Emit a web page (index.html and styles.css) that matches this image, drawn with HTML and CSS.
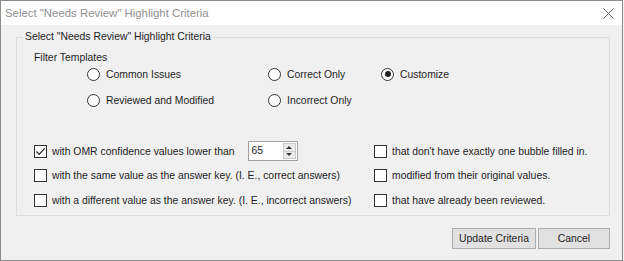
FILE: index.html
```html
<!DOCTYPE html>
<html lang="en">
<head>
    <meta charset="UTF-8">
    <title>Select "Needs Review" Highlight Criteria</title>
    <link rel="stylesheet" href="styles.css">
</head>
<body>
    <div class="window">
        <div class="titlebar">
            <span class="title">Select "Needs Review" Highlight Criteria</span>
            <svg class="close" width="11" height="11" viewBox="0 0 11 11">
                <path d="M0.5 0.5 L10.5 10.5 M10.5 0.5 L0.5 10.5" stroke="#6a6a6a" stroke-width="1" fill="none"/>
            </svg>
        </div>
        <div class="content">
            <fieldset class="group">
                <legend>Select "Needs Review" Highlight Criteria</legend>
                <div class="caption">Filter Templates</div>
                <div class="templates">
                    <label class="option"><span class="radio"></span>Common Issues</label>
                    <label class="option"><span class="radio"></span>Correct Only</label>
                    <label class="option"><span class="radio checked"></span>Customize</label>
                    <label class="option"><span class="radio"></span>Reviewed and Modified</label>
                    <label class="option"><span class="radio"></span>Incorrect Only</label>
                </div>
                <div class="criteria">
                    <div class="option">
                        <span class="check">
                            <svg width="11" height="11" viewBox="0 0 11 11">
                                <path d="M1.5 5.5 L4.2 8.3 L9.6 2.4" stroke="#222" stroke-width="1.2" fill="none"/>
                            </svg>
                        </span>
                        with OMR confidence values lower than
                        <div class="spinner">
                            <span class="value">65</span>
                            <span class="arrows">
                                <span class="arrow up"></span>
                                <span class="arrow down"></span>
                            </span>
                        </div>
                    </div>
                    <div class="option"><span class="check"></span>that don't have exactly one bubble filled in.</div>
                    <div class="option"><span class="check"></span>with the same value as the answer key. (I. E., correct answers)</div>
                    <div class="option"><span class="check"></span>modified from their original values.</div>
                    <div class="option"><span class="check"></span>with a different value as the answer key. (I. E., incorrect answers)</div>
                    <div class="option"><span class="check"></span>that have already been reviewed.</div>
                </div>
            </fieldset>
            <div class="actions">
                <button class="btn btn-update">Update Criteria</button>
                <button class="btn btn-cancel">Cancel</button>
            </div>
        </div>
    </div>
</body>
</html>
```

FILE: styles.css
```css
body {
    margin: 0;
    padding: 0;
    font-family: "Liberation Sans", Arial, sans-serif;
    font-size: 10.4px;
    color: #1e1e1e;
    background-color: #f0f0f0;
}
.window {
    width: 623px;
    height: 261px;
    box-sizing: border-box;
    border: 1px solid #8c8c8c;
    background-color: #f0f0f0;
}
.titlebar {
    display: flex;
    align-items: center;
    height: 24px;
    padding-left: 4px;
    background-color: #fff;
}
.title {
    font-size: 11.4px;
    color: #8f8f8f;
}
.close {
    margin-left: auto;
    margin-right: 8px;
}
.content {
    padding: 0 12px 0 15px;
}
.group {
    margin: 5px 0 0 0;
    padding: 0 0 5px 0;
    border: 1px solid #dcdcdc;
    min-width: 0;
}
.group legend {
    margin-left: 6px;
    padding: 0 2px;
    line-height: 14px;
}
.caption {
    margin: 7px 0 0 17px;
    line-height: 13px;
}
.templates {
    display: grid;
    grid-template-columns: 181px 113px auto;
    grid-auto-rows: 20px;
    row-gap: 6px;
    margin-left: 70px;
}
.option {
    display: flex;
    align-items: center;
    white-space: nowrap;
}
.radio {
    width: 11px;
    height: 11px;
    border: 1px solid #333;
    border-radius: 50%;
    background-color: #fff;
    margin-right: 6px;
    display: flex;
    align-items: center;
    justify-content: center;
}
.radio.checked::after {
    content: "";
    width: 6px;
    height: 6px;
    border-radius: 50%;
    background-color: #222;
}
.criteria {
    display: grid;
    grid-template-columns: 340px auto;
    grid-auto-rows: 20px;
    row-gap: 4.5px;
    margin: 31px 0 0 17px;
}
.check {
    width: 11px;
    height: 11px;
    border: 1px solid #333;
    background-color: #fff;
    margin-right: 5px;
    display: flex;
}
.spinner {
    display: flex;
    width: 50px;
    height: 20px;
    box-sizing: border-box;
    margin-left: 13px;
    border: 1px solid #a0a0a0;
    background-color: #fff;
}
.spinner .value {
    flex: 1;
    padding-left: 3px;
    line-height: 18px;
}
.arrows {
    display: flex;
    flex-direction: column;
    width: 13px;
    margin: 1px 1px 1px 0;
    border: 1px solid #c8c8c8;
    background-color: #ececec;
    box-sizing: border-box;
}
.arrow {
    flex: 1;
    display: flex;
    align-items: center;
    justify-content: center;
}
.arrow.up {
    border-bottom: 1px solid #d0d0d0;
}
.arrow::after {
    content: "";
    border-left: 3px solid transparent;
    border-right: 3px solid transparent;
}
.arrow.up::after {
    border-bottom: 3px solid #333;
}
.arrow.down::after {
    border-top: 3px solid #333;
}
.actions {
    display: flex;
    justify-content: flex-end;
    gap: 2px;
    margin-top: 12px;
}
.btn {
    height: 21px;
    padding: 0;
    font-family: inherit;
    font-size: 10.4px;
    color: #1e1e1e;
    background-color: #e1e1e1;
    border: 1px solid #adadad;
    border-radius: 0;
}
.btn-update {
    width: 84px;
}
.btn-cancel {
    width: 72px;
}
```
